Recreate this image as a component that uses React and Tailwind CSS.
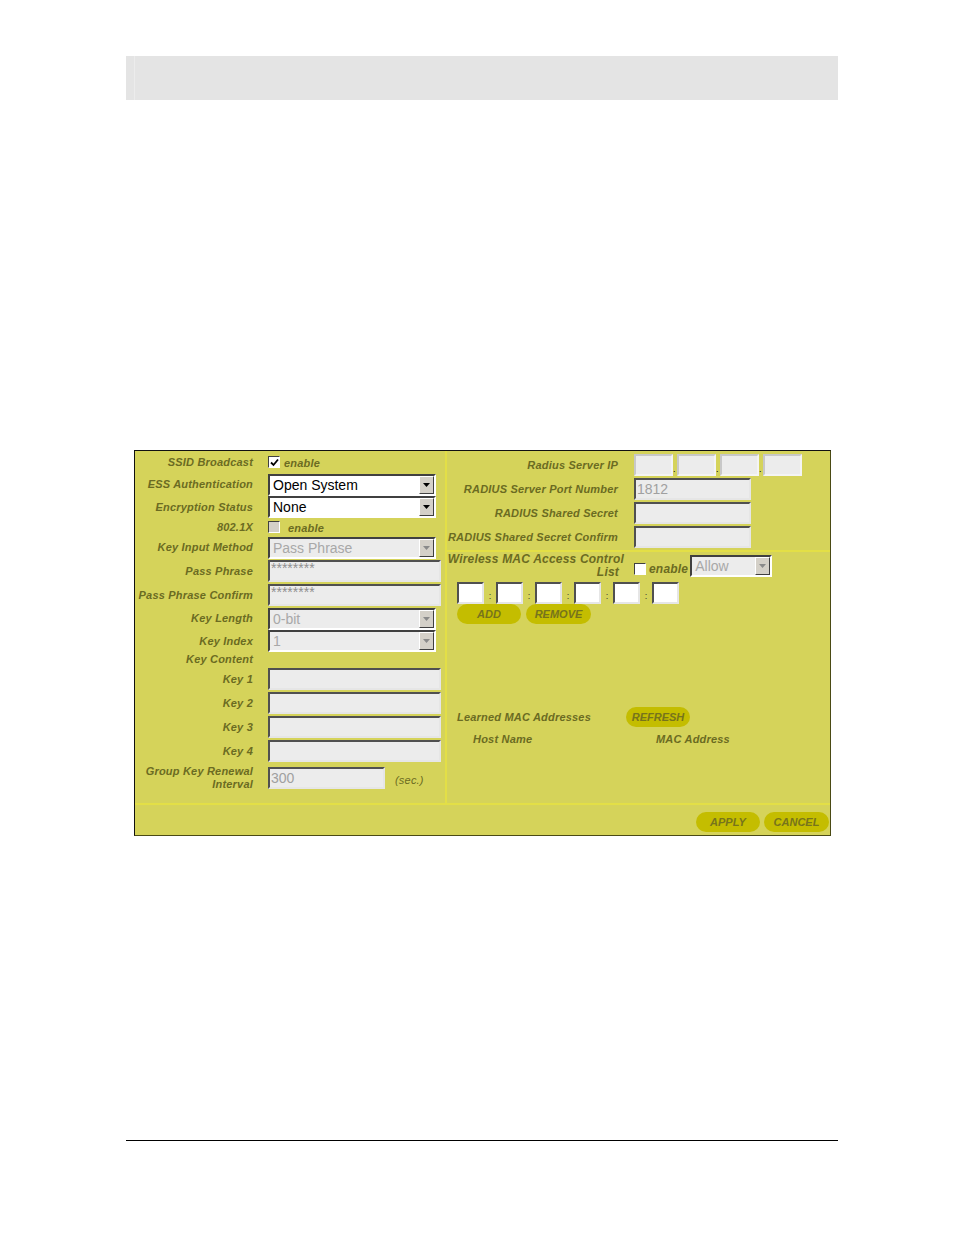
import React from 'react';

const font = { fontFamily: '"Liberation Sans", Arial, sans-serif' };

function Label({ children, className = '' }) {
  return (
    <span
      className={`whitespace-nowrap text-[11px] font-bold italic text-[#6b6b22] leading-[13px] tracking-[0.2px] ${className}`}
    >
      {children}
    </span>
  );
}

function Checkbox({ checked, disabled }) {
  return (
    <span
      className={`w-[12px] h-[12px] flex items-center justify-center border border-t-[#404040] border-l-[#404040] border-b-white border-r-white ${
        disabled ? 'bg-[#d4d0c8]' : 'bg-white'
      }`}
    >
      {checked && (
        <svg width="9" height="9" viewBox="0 0 9 9">
          <path d="M1 4.5 L3.5 7 L8 1.5" stroke="#000" strokeWidth="1.8" fill="none" />
        </svg>
      )}
    </span>
  );
}

function Select({ value, disabled, width = 'w-[168px]' }) {
  return (
    <div
      className={`${width} h-[22px] flex items-stretch border-2 border-t-[#404040] border-l-[#404040] border-b-white border-r-white ${
        disabled ? 'bg-[#ececec]' : 'bg-white'
      }`}
    >
      <span
        className={`flex-1 pl-[3px] text-[14px] leading-[18px] ${disabled ? 'text-[#a8a8a8]' : 'text-black'}`}
      >
        {value}
      </span>
      <span className="w-[15px] bg-[#d4d0c8] flex items-center justify-center border border-t-white border-l-white border-b-[#404040] border-r-[#404040]">
        <svg width="7" height="4" viewBox="0 0 7 4">
          <path d="M0 0 H7 L3.5 4 Z" fill={disabled ? '#8a8a8a' : '#000'} />
        </svg>
      </span>
    </div>
  );
}

function Input({ value = '', width = 'w-[173px]', light, white, stars }) {
  const border = light
    ? 'border-2 border-t-[#c8c8c8] border-l-[#c8c8c8] border-b-[#f4f4f4] border-r-[#f4f4f4]'
    : 'border-2 border-t-[#505050] border-l-[#505050] border-b-[#e6e6e6] border-r-[#e6e6e6]';
  return (
    <div
      className={`${width} h-[22px] ${border} ${white ? 'bg-white' : 'bg-[#ececec]'} ${
        stars ? 'text-[#909090] text-[14px] leading-[12px]' : 'text-[#a0a0a0] text-[14px] leading-[18px]'
      } pl-[1px] overflow-hidden`}
    >
      {value}
    </div>
  );
}

function Pill({ children, width = 'w-[64px]' }) {
  return (
    <span
      className={`${width} h-[20px] rounded-full bg-[#c4bd00] flex items-center justify-center text-[11px] font-bold italic text-[#77741c]`}
    >
      {children}
    </span>
  );
}

function Row({ h, label, children, label2 }) {
  return (
    <div className={`flex items-center ${h}`}>
      <div className="w-[118px] flex flex-col items-end shrink-0">
        <Label>{label}</Label>
        {label2 && <Label>{label2}</Label>}
      </div>
      <div className="ml-[15px] flex items-center">{children}</div>
    </div>
  );
}

function RRow({ label, children }) {
  return (
    <div className="flex items-center h-[24px]">
      <div className="w-[171px] flex justify-end shrink-0">
        <Label>{label}</Label>
      </div>
      <div className="ml-[16px] flex items-center">{children}</div>
    </div>
  );
}

export default function App() {
  return (
    <div className="w-[954px] h-[1235px] bg-white" style={font}>
      <div className="pt-[56px]">
        <div className="ml-[126px] w-[712px] h-[44px] bg-[#e4e4e4] flex">
          <div className="ml-[8px] w-px bg-[#ececec]" />
        </div>
      </div>

      <div className="mt-[350px] ml-[134px] w-[697px] h-[386px] border border-t-[#111] border-l-[#111] border-r-[#4a4a14] border-b-[#4a4a14] bg-[#d5d35a] flex flex-col">
        <div className="flex h-[352px]">
          {/* left column */}
          <div className="w-[310px] flex flex-col">
            <Row h="h-[22px]" label="SSID Broadcast">
              <Checkbox checked />
              <Label className="ml-[4px] mt-[2px]">enable</Label>
            </Row>
            <Row h="h-[23px]" label="ESS Authentication">
              <Select value="Open System" />
            </Row>
            <Row h="h-[22px]" label="Encryption Status">
              <Select value="None" />
            </Row>
            <Row h="h-[18px]" label="802.1X">
              <Checkbox disabled />
              <Label className="ml-[8px] mt-[3px]">enable</Label>
            </Row>
            <Row h="h-[23px]" label="Key Input Method">
              <Select value="Pass Phrase" disabled />
            </Row>
            <Row h="h-[24px]" label="Pass Phrase">
              <Input value="********" stars />
            </Row>
            <Row h="h-[24px]" label="Pass Phrase Confirm">
              <Input value="********" stars />
            </Row>
            <Row h="h-[23px]" label="Key Length">
              <Select value="0-bit" disabled />
            </Row>
            <Row h="h-[22px]" label="Key Index">
              <Select value="1" disabled />
            </Row>
            <Row h="h-[15px]" label="Key Content" />
            <Row h="h-[24px]" label="Key 1">
              <Input />
            </Row>
            <Row h="h-[24px]" label="Key 2">
              <Input />
            </Row>
            <Row h="h-[24px]" label="Key 3">
              <Input />
            </Row>
            <Row h="h-[24px]" label="Key 4">
              <Input />
            </Row>
            <Row h="h-[30px]" label="Group Key Renewal" label2="Interval">
              <Input value="300" width="w-[117px]" />
              <Label className="ml-[10px] mt-[4px] font-normal">(sec.)</Label>
            </Row>
          </div>

          <div className="w-[2px] bg-[#e3df46]" />

          {/* right column */}
          <div className="flex-1 flex flex-col">
            <div className="pt-[2px]">
              <RRow label="Radius Server IP">
                {[0, 1, 2, 3].map((i) => (
                  <React.Fragment key={i}>
                    {i > 0 && <span className="w-[4px] text-[9px] text-black leading-none self-end mb-[2px]">.</span>}
                    <Input width="w-[39px]" light />
                  </React.Fragment>
                ))}
              </RRow>
              <RRow label="RADIUS Server Port Number">
                <Input value="1812" width="w-[117px]" />
              </RRow>
              <RRow label="RADIUS Shared Secret">
                <Input width="w-[117px]" />
              </RRow>
              <RRow label="RADIUS Shared Secret Confirm">
                <Input width="w-[117px]" />
              </RRow>
            </div>
            <div className="h-[2px] bg-[#e3df46] mt-[1px]" />

            <div className="flex items-center h-[28px]">
              <div className="w-[177px] flex flex-col items-end shrink-0">
                <Label className="text-[12px]">Wireless MAC Access Control</Label>
                <Label className="text-[12px] mr-[5px]">List</Label>
              </div>
              <div className="ml-[10px] flex items-center">
                <span className="mt-[6px]">
                  <Checkbox />
                </span>
                <Label className="ml-[3px] mt-[7px] text-[12px]">enable</Label>
                <span className="ml-[2px]">
                  <Select value="Allow" disabled width="w-[82px]" />
                </span>
              </div>
            </div>

            <div className="flex items-center h-[24px] pl-[10px] pt-[1px]">
              {[0, 1, 2, 3, 4, 5].map((i) => (
                <React.Fragment key={i}>
                  {i > 0 && (
                    <span className="w-[12px] text-center text-[9px] text-[#333] leading-none self-end mb-[3px]">:</span>
                  )}
                  <Input width="w-[27px]" white />
                </React.Fragment>
              ))}
            </div>

            <div className="flex gap-[5px] pl-[10px]">
              <Pill>ADD</Pill>
              <Pill width="w-[65px]">REMOVE</Pill>
            </div>

            <div className="flex items-center pl-[10px] mt-[83px] h-[20px]">
              <Label className="w-[169px]">Learned MAC Addresses</Label>
              <Pill>REFRESH</Pill>
            </div>
            <div className="flex items-center pl-[26px] mt-[5px] h-[14px]">
              <Label className="w-[183px]">Host Name</Label>
              <Label>MAC Address</Label>
            </div>
          </div>
        </div>

        <div className="h-[2px] bg-[#e3df46]" />

        <div className="flex justify-end gap-[4px] pt-[7px] pr-[1px]">
          <Pill>APPLY</Pill>
          <Pill width="w-[65px]">CANCEL</Pill>
        </div>
      </div>

      <div className="mt-[304px] ml-[126px] w-[712px] h-px bg-black" />
    </div>
  );
}
